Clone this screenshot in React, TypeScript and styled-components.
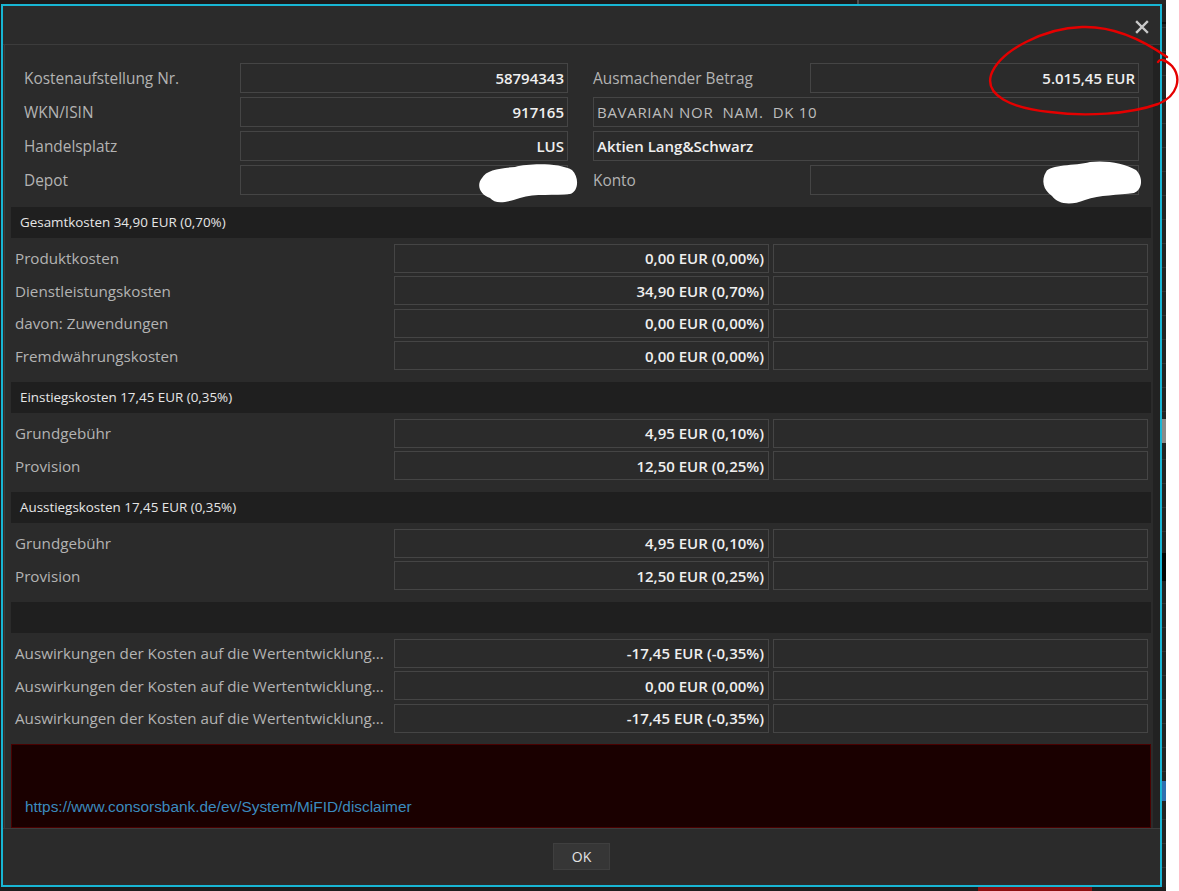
import styled, { createGlobalStyle } from "styled-components";

const GlobalStyle = createGlobalStyle`
  html, body {
    margin: 0;
    padding: 0;
    background: #ffffff;
  }
  body {
    font-family: "Open Sans", "Noto Sans", sans-serif;
  }
  * {
    box-sizing: border-box;
  }
`;

type CostRowData = { label: string; value: string };
type SectionData = { title: string; rows: CostRowData[] };

const sections: SectionData[] = [
  {
    title: "Gesamtkosten 34,90 EUR (0,70%)",
    rows: [
      { label: "Produktkosten", value: "0,00 EUR (0,00%)" },
      { label: "Dienstleistungskosten", value: "34,90 EUR (0,70%)" },
      { label: "davon: Zuwendungen", value: "0,00 EUR (0,00%)" },
      { label: "Fremdwährungskosten", value: "0,00 EUR (0,00%)" },
    ],
  },
  {
    title: "Einstiegskosten 17,45 EUR (0,35%)",
    rows: [
      { label: "Grundgebühr", value: "4,95 EUR (0,10%)" },
      { label: "Provision", value: "12,50 EUR (0,25%)" },
    ],
  },
  {
    title: "Ausstiegskosten 17,45 EUR (0,35%)",
    rows: [
      { label: "Grundgebühr", value: "4,95 EUR (0,10%)" },
      { label: "Provision", value: "12,50 EUR (0,25%)" },
    ],
  },
  {
    title: "",
    rows: [
      { label: "Auswirkungen der Kosten auf die Wertentwicklung...", value: "-17,45 EUR (-0,35%)" },
      { label: "Auswirkungen der Kosten auf die Wertentwicklung...", value: "0,00 EUR (0,00%)" },
      { label: "Auswirkungen der Kosten auf die Wertentwicklung...", value: "-17,45 EUR (-0,35%)" },
    ],
  },
];

/* -------- page frame (app behind the dialog) -------- */
const Page = styled.div`
  position: relative;
  width: 1179px;
  height: 891px;
  overflow: hidden;
  display: flex;
  background: #ffffff;
`;

const AppArea = styled.div`
  width: 1166px;
  display: grid;
  grid-template-rows: 4px 883px 4px;
  background: #1c1c1c;
`;

const TopStrip = styled.div`
  display: grid;
  grid-template-columns: 857px 2px 1fr;
  background: #262626;
  & > :first-child {
    background: #1b1b1b;
  }
  & > :nth-child(2) {
    background: #4d4d4d;
  }
`;

const Middle = styled.div`
  display: flex;
  padding-left: 1px;
`;

const RightStrip = styled.div`
  flex: 1;
  display: flex;
  flex-direction: column;
  background: repeating-linear-gradient(
    to bottom,
    #232323 0px,
    #232323 23px,
    #343434 23px,
    #343434 24px
  );
`;

const StripBlock = styled.div<{ $h: number; $top: number; $color: string }>`
  height: ${(p) => p.$h}px;
  margin-top: ${(p) => p.$top}px;
  background: ${(p) => p.$color};
`;

const BottomStrip = styled.div`
  display: grid;
  grid-template-columns: 978px 114px 1fr;
  background: #1d1d1d;
  & > :nth-child(2) {
    background: #8c1010;
  }
`;

/* -------- dialog -------- */
const Dialog = styled.div`
  width: 1161px;
  height: 883px;
  flex: none;
  border: 2px solid #18b6d4;
  background: #2b2b2b;
  display: flex;
  flex-direction: column;
`;

const TitleBar = styled.div`
  height: 39px;
  border-bottom: 1px solid #3c3c3c;
  display: flex;
  justify-content: flex-end;
  align-items: center;
  padding: 3px 11px 0 0;
`;

const CloseButton = styled.button`
  width: 14px;
  height: 14px;
  padding: 0;
  border: none;
  background: none;
  cursor: pointer;
  display: flex;
`;

const Body = styled.div`
  flex: 1;
  display: flex;
  padding-left: 1px;
  min-height: 0;
`;

const Content = styled.div`
  flex: 1;
  min-width: 0;
  border-left: 1px solid #3b3b3b;
  padding-top: 18px;
  display: flex;
  flex-direction: column;
`;

const Gutter = styled.div`
  width: 7px;
  flex: none;
  background: #222222;
`;

const TopFields = styled.div`
  display: grid;
  grid-template-columns: 216px 353px 217px 329px;
  grid-auto-rows: 30px;
  row-gap: 4px;
  padding-left: 19px;
`;

const FieldLabel = styled.div`
  display: flex;
  align-items: center;
  font-size: 15.4px;
  color: #b3b3b3;
  white-space: nowrap;
`;

const FieldBox = styled.div<{ $wide?: boolean; $left?: boolean; $dim?: boolean; $narrow?: boolean }>`
  grid-column: ${(p) => (p.$wide ? "3 / 5" : "auto")};
  width: ${(p) => (p.$narrow ? "328px" : "auto")};
  border: 1px solid #454545;
  background: #2b2b2b;
  display: flex;
  align-items: center;
  justify-content: ${(p) => (p.$left ? "flex-start" : "flex-end")};
  padding: 0 3px 0 3px;
  font-size: 15px;
  font-weight: ${(p) => (p.$dim ? 400 : 600)};
  letter-spacing: ${(p) => (p.$dim ? "0.7px" : "normal")};
  color: ${(p) => (p.$dim ? "#bdbdbd" : "#efefef")};
  white-space: pre;
`;

const Section = styled.div`
  margin: 11.5px 0 0 6px;
  width: 1140px;
  display: flex;
  flex-direction: column;
`;

const SectionHeader = styled.div`
  height: 31px;
  background: #1f1f1f;
  display: flex;
  align-items: center;
  padding-left: 9px;
  font-size: 13.4px;
  color: #e6e6e6;
  margin-bottom: 6px;
`;

const CostRow = styled.div`
  display: grid;
  grid-template-columns: 1fr 375px 375px;
  column-gap: 4px;
  height: 29px;
  padding-right: 3px;
  & + & {
    margin-top: 3.5px;
  }
`;

const CostLabel = styled.div`
  display: flex;
  align-items: center;
  padding-left: 4px;
  font-size: 15.2px;
  color: #b3b3b3;
  white-space: nowrap;
  overflow: hidden;
  min-width: 0;
`;

const CostBox = styled.div`
  border: 1px solid #454545;
  background: #2b2b2b;
  display: flex;
  align-items: center;
  justify-content: flex-end;
  padding-right: 4px;
  font-size: 15px;
  font-weight: 600;
  color: #efefef;
  white-space: nowrap;
`;

const Disclaimer = styled.div`
  margin: 11px 0 0 6px;
  width: 1140px;
  height: 85px;
  background: #1a0000;
  border: 1px solid #4a0000;
  display: flex;
  align-items: flex-end;
  padding: 0 0 11px 13px;
`;

const DisclaimerLink = styled.a`
  font-family: "Liberation Sans", Arial, sans-serif;
  font-size: 15.4px;
  color: #3a8bbf;
  text-decoration: none;
`;

const Footer = styled.div`
  height: 57px;
  border-top: 1px solid #3c3c3c;
  display: flex;
  justify-content: center;
  padding-top: 14px;
`;

const OkButton = styled.button`
  width: 57px;
  height: 27px;
  background: #363636;
  border: 1px solid #3f3f3f;
  color: #e4e4e4;
  font-family: "Open Sans", sans-serif;
  font-size: 14px;
  padding: 0;
  cursor: pointer;
`;

/* -------- annotations drawn over the screenshot -------- */
const Annotations = styled.svg`
  position: absolute;
  left: 0;
  top: 0;
  pointer-events: none;
`;

export default function App() {
  return (
    <>
      <GlobalStyle />
      <Page>
        <AppArea>
          <TopStrip>
            <div />
            <div />
            <div />
          </TopStrip>
          <Middle>
            <Dialog>
              <TitleBar>
                <CloseButton aria-label="Schließen">
                  <svg width="14" height="14" viewBox="0 0 14 14">
                    <path d="M2 2 L12 12 M12 2 L2 12" stroke="#c9c9c9" strokeWidth="2.4" strokeLinecap="square" />
                  </svg>
                </CloseButton>
              </TitleBar>
              <Body>
                <Content>
                  <TopFields>
                    <FieldLabel>Kostenaufstellung Nr.</FieldLabel>
                    <FieldBox $narrow>58794343</FieldBox>
                    <FieldLabel>Ausmachender Betrag</FieldLabel>
                    <FieldBox>5.015,45 EUR</FieldBox>

                    <FieldLabel>WKN/ISIN</FieldLabel>
                    <FieldBox $narrow>917165</FieldBox>
                    <FieldBox $wide $left $dim>{"BAVARIAN NOR  NAM.  DK 10"}</FieldBox>

                    <FieldLabel>Handelsplatz</FieldLabel>
                    <FieldBox $narrow>LUS</FieldBox>
                    <FieldBox $wide $left>Aktien Lang&amp;Schwarz</FieldBox>

                    <FieldLabel>Depot</FieldLabel>
                    <FieldBox $narrow />
                    <FieldLabel>Konto</FieldLabel>
                    <FieldBox />
                  </TopFields>

                  {sections.map((s, i) => (
                    <Section key={i}>
                      <SectionHeader>{s.title}</SectionHeader>
                      {s.rows.map((r, j) => (
                        <CostRow key={j}>
                          <CostLabel>{r.label}</CostLabel>
                          <CostBox>{r.value}</CostBox>
                          <CostBox />
                        </CostRow>
                      ))}
                    </Section>
                  ))}

                  <Disclaimer>
                    <DisclaimerLink href="#">https://www.consorsbank.de/ev/System/MiFID/disclaimer</DisclaimerLink>
                  </Disclaimer>
                </Content>
                <Gutter />
              </Body>
              <Footer>
                <OkButton>OK</OkButton>
              </Footer>
            </Dialog>
            <RightStrip>
              <StripBlock $h={2} $top={18} $color="#0e0e0e" />
              <StripBlock $h={24} $top={395} $color="#8a8a8a" />
              <StripBlock $h={28} $top={110} $color="#050505" />
              <StripBlock $h={20} $top={200} $color="#2f6fb0" />
            </RightStrip>
          </Middle>
          <BottomStrip>
            <div />
            <div />
            <div />
          </BottomStrip>
        </AppArea>

        <Annotations width="1179" height="891" viewBox="0 0 1179 891">
          <path
            d="M482 178 C486 170 500 168 515 167 C530 163 560 163 572 170 C580 178 578 192 570 194 C555 196 535 193 520 198 C505 203 495 204 490 198 C480 195 476 185 482 178 Z"
            fill="#ffffff"
          />
          <path
            d="M1046 172 C1050 164 1075 166 1090 162 C1105 160 1125 163 1136 170 C1144 178 1142 190 1134 193 C1118 195 1100 195 1085 200 C1070 206 1058 204 1052 196 C1043 190 1041 180 1046 172 Z"
            fill="#ffffff"
          />
          <path
            d="M1167 57 C1140 38 1110 26 1082 27 C1045 28 1000 50 991 75 C985 95 1010 108 1050 112 C1085 117 1130 114 1158 104 C1178 96 1182 78 1172 66 C1166 60 1160 58 1158 62"
            fill="none"
            stroke="#e50000"
            strokeWidth="2.4"
            strokeLinecap="round"
          />
        </Annotations>
      </Page>
    </>
  );
}
